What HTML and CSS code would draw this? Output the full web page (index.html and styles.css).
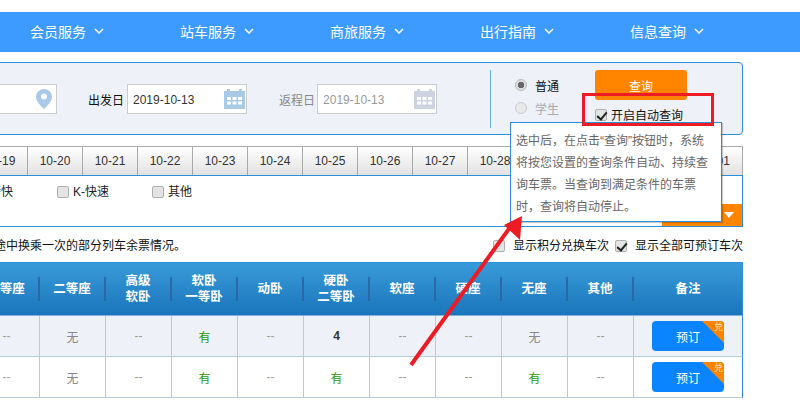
FILE: index.html
```html
<!DOCTYPE html>
<html lang="zh-CN">
<head>
  <meta charset="utf-8">
  <link rel="stylesheet" href="styles.css">
</head>
<body>
<div class="nav">
  <a>会员服务<svg class="chev" viewBox="0 0 10 6"><path d="M1 1l4 4 4-4"/></svg></a>
  <a>站车服务<svg class="chev" viewBox="0 0 10 6"><path d="M1 1l4 4 4-4"/></svg></a>
  <a>商旅服务<svg class="chev" viewBox="0 0 10 6"><path d="M1 1l4 4 4-4"/></svg></a>
  <a>出行指南<svg class="chev" viewBox="0 0 10 6"><path d="M1 1l4 4 4-4"/></svg></a>
  <a>信息查询<svg class="chev" viewBox="0 0 10 6"><path d="M1 1l4 4 4-4"/></svg></a>
</div>

<div class="page">
  <div class="search">
    <div class="field station">
      <svg class="pin" viewBox="0 0 16 20"><path d="M8 0a8 8 0 0 0-8 8c0 4.500 4.500 8.500 8 12 3.500-3.500 8-7.500 8-12a8 8 0 0 0-8-8z"/><circle cx="8" cy="7.500" r="3" fill="#fff"/></svg>
    </div>
    <label class="date-label">出发日</label>
    <div class="field date"><span>2019-10-13</span>
      <svg class="cal" viewBox="0 0 21 20"><path d="M0 2h3V0h3v2h9V0h3v2h3v18H0z"/><path fill="#fff" d="M3 8h4v3H3zM8.500 8h4v3h-4zM14 8h4v3h-4zM3 12.500h4v3H3zM8.500 12.500h4v3h-4zM14 12.500h4v3h-4z"/></svg>
    </div>
    <label class="date-label off">返程日</label>
    <div class="field date off"><span>2019-10-13</span>
      <svg class="cal" viewBox="0 0 21 20"><path d="M0 2h3V0h3v2h9V0h3v2h3v18H0z"/><path fill="#fff" d="M3 8h4v3H3zM8.500 8h4v3h-4zM14 8h4v3h-4zM3 12.500h4v3H3zM8.500 12.500h4v3h-4zM14 12.500h4v3h-4z"/></svg>
    </div>
    <div class="types">
      <div class="type"><i class="radio on"></i>普通</div>
      <div class="type off"><i class="radio"></i>学生</div>
    </div>
    <div class="submit">
      <button class="query">查询</button>
      <div class="auto"><i class="check on"></i>开启自动查询</div>
    </div>
  </div>

  <div class="tabs">
    <span>10-19</span><span>10-20</span><span>10-21</span><span>10-22</span><span>10-23</span>
    <span>10-24</span><span>10-25</span><span>10-26</span><span>10-27</span><span>10-28</span>
    <span>10-29</span><span>10-30</span><span>10-31</span><span>11-01</span>
  </div>

  <div class="filter">
    <div class="filter-row">
      <span class="opt fast">特快</span>
      <span class="opt kuai"><i class="check"></i>K-快速</span>
      <span class="opt"><i class="check"></i>其他</span>
    </div>
    <div class="more"><b></b></div>
  </div>

  <div class="notice">
    <p>途中换乘一次的部分列车余票情况。</p>
    <div class="notice-opts">
      <span><i class="check"></i>显示积分兑换车次</span>
      <span><i class="check on"></i>显示全部可预订车次</span>
    </div>
  </div>

  <div class="grid head">
    <div>一等座</div><div>二等座</div><div>高级<br>软卧</div><div>软卧<br>一等卧</div><div>动卧</div>
    <div>硬卧<br>二等卧</div><div>软座</div><div>硬座</div><div>无座</div><div>其他</div><div>备注</div>
  </div>
  <div class="grid row alt">
    <div>--</div><div class="none">无</div><div>--</div><div class="yes">有</div><div>--</div>
    <div class="num">4</div><div>--</div><div>--</div><div class="none">无</div><div>--</div>
    <div><button class="book">预订<em>兑</em></button></div>
  </div>
  <div class="grid row">
    <div>--</div><div class="none">无</div><div>--</div><div class="yes">有</div><div>--</div>
    <div class="yes">有</div><div>--</div><div>--</div><div class="yes">有</div><div>--</div>
    <div><button class="book">预订<em>兑</em></button></div>
  </div>
</div>

<!-- popup and the annotation drawn on top of the screenshot -->
<div class="tip">选中后，在点击“查询”按钮时，系统<br>将按您设置的查询条件自动、持续查<br>询车票。当查询到满足条件的车票<br>时，查询将自动停止。</div>
<div class="redbox"></div>
<svg class="arrow" viewBox="0 0 800 400"><path d="M411 365L511 226" stroke="#ed1c24" stroke-width="4" fill="none"/><path fill="#ed1c24" d="M522 216L520 240 504 225z"/></svg>
</body>
</html>
```

FILE: styles.css
```css
* {
  box-sizing: border-box;
}

html, body {
  margin: 0;
  height: 400px;
  overflow: hidden;
}

body {
  position: relative;
  background: #fff;
  font-family: "Liberation Sans", "Noto Sans CJK SC", sans-serif;
  font-size: 12px;
  color: #222;
  padding-top: 12px;
}

i, em {
  font-style: normal;
}

.nav {
  display: flex;
  height: 40px;
  padding-left: 30px;
  background: #3d9bff;
}

.nav a {
  width: 150px;
  display: flex;
  align-items: center;
  padding-bottom: 3px;
  color: #fff;
  font-size: 14px;
}

.chev {
  width: 10px;
  height: 6px;
  margin-left: 8px;
  fill: none;
  stroke: #fff;
  stroke-width: 1.500;
}

/* the left side of the page runs off the window */
.page {
  width: 770px;
  margin-left: -27px;
  margin-top: 10px;
}

.search {
  display: flex;
  align-items: center;
  height: 73px;
  background: #eef1f8;
  border: 1px solid #2a8fd9;
  border-radius: 4px;
}

.field {
  display: flex;
  align-items: center;
  justify-content: space-between;
  height: 30px;
  background: #fff;
  border: 1px solid #ccc;
}

.station {
  width: 120px;
  margin-left: -37px;
  justify-content: flex-end;
  padding-right: 4px;
}

.pin {
  width: 16px;
  height: 20px;
  fill: #a9cae6;
}

.date-label {
  margin-left: 31px;
  margin-right: 3px;
  padding-top: 2px;
  color: #111;
}

.date-label + .date {
  width: 120px;
  padding: 0 1px 0 5px;
  color: #333;
}

.date span {
  padding-top: 2px;
}

.date-label.off {
  margin-left: 32px;
  margin-right: 2px;
  color: #888;
}

.date.off {
  color: #999;
}

.cal {
  width: 21px;
  height: 20px;
  fill: #a9cae6;
}

.date.off .cal {
  fill: #cdd3df;
}

.types {
  align-self: center;
  height: 58px;
  margin-left: 53px;
  padding: 4px 0 0 24px;
  border-left: 1px solid #5fb0e0;
}

.type {
  display: flex;
  align-items: center;
  height: 23px;
  color: #111;
}

.type.off {
  color: #aaa;
}

.radio {
  width: 12px;
  height: 12px;
  margin-right: 8px;
  border-radius: 50%;
  border: 1px solid #bbb;
  background: #e6e6e6;
}

.radio.on {
  background: radial-gradient(circle, #666 0 3px, #ddd 3.500px);
}

.type.off .radio {
  opacity: .7;
}

.submit {
  margin-left: 36px;
  align-self: flex-start;
  padding-top: 7px;
}

.query {
  display: block;
  width: 92px;
  height: 30px;
  border: 0;
  border-radius: 3px;
  background: #ff8400;
  color: #fff;
  font: inherit;
}

.auto {
  display: flex;
  align-items: center;
  margin-top: 6px;
  color: #111;
}

.check {
  display: inline-block;
  position: relative;
  flex: none;
  width: 12px;
  height: 12px;
  margin-right: 4px;
  vertical-align: -2px;
  border: 1px solid #b0b0b0;
  border-radius: 2px;
  background: #e4e4e4;
}

.check.on::after {
  content: "";
  position: absolute;
  left: 3px;
  top: 0;
  width: 4px;
  height: 8px;
  border: solid #222;
  border-width: 0 2px 2px 0;
  transform: rotate(40deg);
}

.tabs {
  display: grid;
  grid-template-columns: repeat(14, 55px);
  height: 30px;
  margin-top: 11px;
  border-bottom: 1px solid #2a8fd9;
}

.tabs span {
  display: flex;
  align-items: center;
  justify-content: center;
  border-top: 1px solid #a9a9a9;
  border-right: 1px solid #a9a9a9;
  background: linear-gradient(#fff, #e2e2e2);
  color: #333;
}

.filter {
  display: flex;
  justify-content: space-between;
  align-items: flex-end;
  height: 51px;
  border-right: 1px solid #2a8fd9;
  border-bottom: 1px solid #2a8fd9;
}

.filter-row {
  align-self: flex-start;
  display: flex;
  padding-top: 6px;
  color: #222;
}

.opt {
  width: 95px;
}

.opt.fast {
  width: 84px;
  text-align: right;
  padding-right: 44px;
}

.more {
  display: flex;
  align-items: center;
  justify-content: flex-end;
  width: 80px;
  height: 22px;
  padding-right: 8px;
  background: #ff8400;
}

.more b {
  border: 5px solid transparent;
  border-top: 6px solid #fff;
  border-bottom: 0;
}

.notice {
  display: flex;
  justify-content: space-between;
  align-items: center;
  height: 35px;
}

.notice p {
  margin: 0;
  padding-left: 21px;
  color: #111;
}

.notice-opts {
  display: flex;
  gap: 6px;
  color: #111;
}

.notice-opts .check {
  margin-right: 8px;
}

.grid {
  display: grid;
  grid-template-columns: repeat(10, 66px) 108px;
  padding-left: 1px;
  border-right: 1px solid #2a8fd9;
  text-align: center;
}

.head {
  height: 54px;
  background: linear-gradient(#389bd8, #1b75bc);
  border-top: 1px solid #2a8fd9;
  border-bottom: 1px solid #7fb5dc;
  color: #fff;
  font-size: 12.500px;
  font-weight: bold;
  line-height: 16px;
  align-items: center;
}

.head div {
  display: flex;
  align-items: center;
  justify-content: center;
  height: 24px;
  border-right: 2px solid #2b68a8;
}

.head div:last-child {
  border-right: 0;
}

.row {
  height: 41px;
  border-bottom: 1px solid #b4cdd9;
  color: #a09a94;
}

.row.alt {
  background: #eef1f8;
}

.row div {
  display: flex;
  align-items: center;
  justify-content: center;
  border-right: 1px solid #b4cdd9;
}

.row div:last-child {
  border-right: 0;
}

.row .none {
  color: #888;
}

.row .yes {
  color: #2a9a00;
}

.row .num {
  color: #333;
  font-weight: bold;
}

.book {
  position: relative;
  overflow: hidden;
  width: 72px;
  height: 30px;
  border: 0;
  border-radius: 4px;
  background: #0a84ff;
  color: #fff;
  font: inherit;
}

.book::before {
  content: "";
  position: absolute;
  top: 0;
  right: 0;
  border-style: solid;
  border-width: 0 22px 22px 0;
  border-color: transparent #ff8400 transparent transparent;
}

.book em {
  position: absolute;
  top: 0;
  right: 1px;
  font-size: 9px;
  line-height: 12px;
  color: #ffe6c0;
}

.tip {
  position: absolute;
  left: 510px;
  top: 122px;
  width: 212px;
  height: 100px;
  padding: 7px 5px;
  background: #fff;
  border: 1px solid #2a8fd9;
  color: #666;
  line-height: 22px;
  white-space: nowrap;
  box-shadow: 1px 1px 1px rgba(0,0,0,.2);
}

.redbox {
  position: absolute;
  left: 582px;
  top: 93px;
  width: 132px;
  height: 33px;
  border: 3px solid #ed1c24;
}

.arrow {
  position: absolute;
  left: 0;
  top: 0;
  width: 800px;
  height: 400px;
}
```
